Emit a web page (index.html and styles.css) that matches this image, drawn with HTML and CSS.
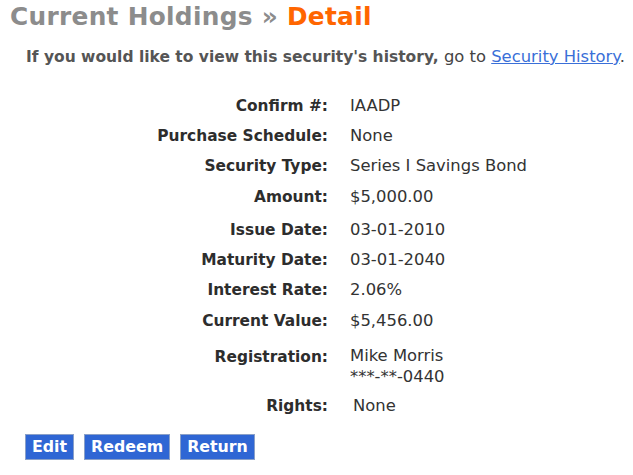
FILE: index.html
```html
<!DOCTYPE html>
<html lang="en">
<head>
    <meta charset="UTF-8">
    <title>Current Holdings - Detail</title>
    <link rel="stylesheet" href="styles.css">
</head>
<body>
    <h1 class="page-title">Current Holdings &raquo; <span class="current">Detail</span></h1>

    <p class="intro"><strong>If you would like to view this security's history,</strong> go to <a href="#">Security History</a>.</p>

    <table class="detail">
        <tr><th>Confirm #:</th><td>IAADP</td></tr>
        <tr><th>Purchase Schedule:</th><td>None</td></tr>
        <tr><th>Security Type:</th><td>Series I Savings Bond</td></tr>
        <tr class="wide"><th>Amount:</th><td>$5,000.00</td></tr>
        <tr class="gap"><th>Issue Date:</th><td>03-01-2010</td></tr>
        <tr><th>Maturity Date:</th><td>03-01-2040</td></tr>
        <tr><th>Interest Rate:</th><td>2.06%</td></tr>
        <tr class="wide"><th>Current Value:</th><td>$5,456.00</td></tr>
        <tr class="reg"><th>Registration:</th><td>Mike Morris<br>***-**-0440</td></tr>
        <tr class="rights"><th>Rights:</th><td>None</td></tr>
    </table>

    <div class="actions">
        <button class="btn">Edit</button>
        <button class="btn">Redeem</button>
        <button class="btn">Return</button>
    </div>
</body>
</html>
```

FILE: styles.css
```css
body {
    margin: 0;
    padding: 0 10px;
    font-family: "DejaVu Sans", Verdana, sans-serif;
    color: #333;
    background: #fff;
}
.page-title {
    margin: 0;
    padding-top: 3px;
    font-size: 24.8px;
    line-height: 28px;
    font-weight: bold;
    color: #8c8c8c;
    letter-spacing: 0.3px;
}
.page-title .current {
    color: #ff6600;
}
.intro {
    margin: 16px 0 0 16px;
    font-size: 16.4px;
    line-height: 20px;
    white-space: nowrap;
    color: #444;
}
.intro strong {
    font-size: 15.5px;
    color: #555;
}
.intro a {
    color: #3a6fd8;
}
.detail {
    margin: 24px 0 0 0;
    border-collapse: collapse;
    line-height: 20px;
}
.detail th {
    width: 318px;
    padding: 5px 22px 5px 0;
    font-size: 15.4px;
    text-align: right;
    vertical-align: top;
    color: #2d2d2d;
}
.detail td {
    padding: 5px 0;
    font-size: 16.4px;
    vertical-align: top;
    color: #333;
}
.detail .wide th, .detail .wide td {
    padding-top: 6px;
}
.detail .gap th, .detail .gap td {
    padding-top: 8px;
}
.detail .reg th, .detail .reg td {
    padding-top: 9px;
    line-height: 21px;
}
.detail .reg th {
    padding-top: 11px;
}
.detail .rights th, .detail .rights td {
    padding-top: 4px;
}
.detail .rights td {
    padding-left: 3px;
}
.actions {
    margin: 13px 0 0 15px;
    display: flex;
    gap: 10px;
}
.btn {
    font-family: inherit;
    font-size: 15.8px;
    line-height: 18px;
    font-weight: bold;
    color: #fff;
    background: #2f66d4;
    border: 1px solid #8aa0c8;
    padding: 3px 6px;
    cursor: pointer;
}
```
